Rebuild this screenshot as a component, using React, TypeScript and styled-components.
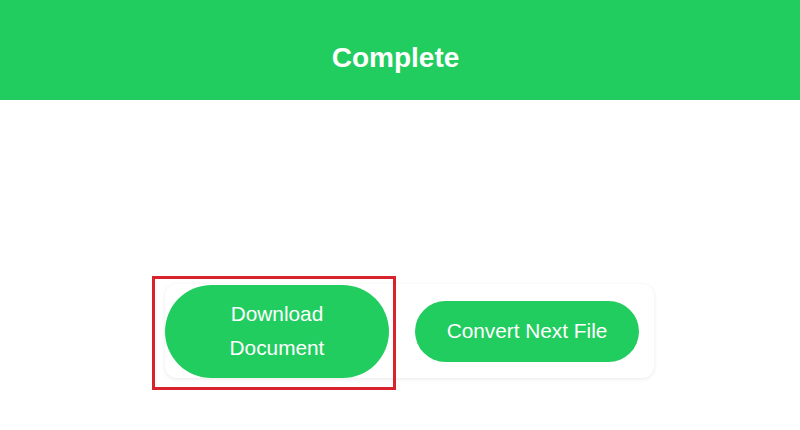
import styled, { createGlobalStyle } from "styled-components";

const green = "#22cd5f";

const GlobalStyle = createGlobalStyle`
  html, body {
    margin: 0;
    padding: 0;
    background: #ffffff;
    font-family: "Liberation Sans", Arial, sans-serif;
  }
`;

const Page = styled.div`
  width: 800px;
  height: 430px;
  display: flex;
  flex-direction: column;
  background: #ffffff;
`;

const Header = styled.header`
  height: 100px;
  background: ${green};
  display: flex;
  align-items: center;
  justify-content: center;
  padding: 16px 9px 0 0;
  box-sizing: border-box;
`;

const Title = styled.h1`
  margin: 0;
  color: #ffffff;
  font-size: 28px;
  font-weight: 700;
`;

const Main = styled.main`
  display: flex;
  justify-content: center;
  padding: 184px 0 0 19px;
`;

const Card = styled.div`
  display: flex;
  align-items: center;
  gap: 26px;
  padding: 0 15px 0 0;
  height: 94px;
  background: #ffffff;
  border-radius: 12px;
  box-shadow: 0 1px 4px rgba(0, 0, 0, 0.09);
`;

const Highlight = styled.div`
  position: relative;

  &::after {
    content: "";
    position: absolute;
    left: -13px;
    top: -9px;
    right: -7px;
    bottom: -12px;
    border: 3px solid #d8232c;
    pointer-events: none;
  }
`;

const Button = styled.button<{ $tall?: boolean }>`
  width: 224px;
  height: ${(p) => (p.$tall ? "93px" : "61px")};
  padding: 0 30px;
  border: none;
  border-radius: 50px;
  background: ${green};
  color: #ffffff;
  font-family: "Liberation Sans", Arial, sans-serif;
  font-size: 20.8px;
  line-height: 34px;
  cursor: pointer;
  display: flex;
  align-items: center;
  justify-content: center;
  text-align: center;
`;

export default function App() {
  return (
    <Page>
      <GlobalStyle />
      <Header>
        <Title>Complete</Title>
      </Header>
      <Main>
        <Card>
          <Highlight>
            <Button $tall>Download Document</Button>
          </Highlight>
          <Button>Convert Next File</Button>
        </Card>
      </Main>
    </Page>
  );
}
